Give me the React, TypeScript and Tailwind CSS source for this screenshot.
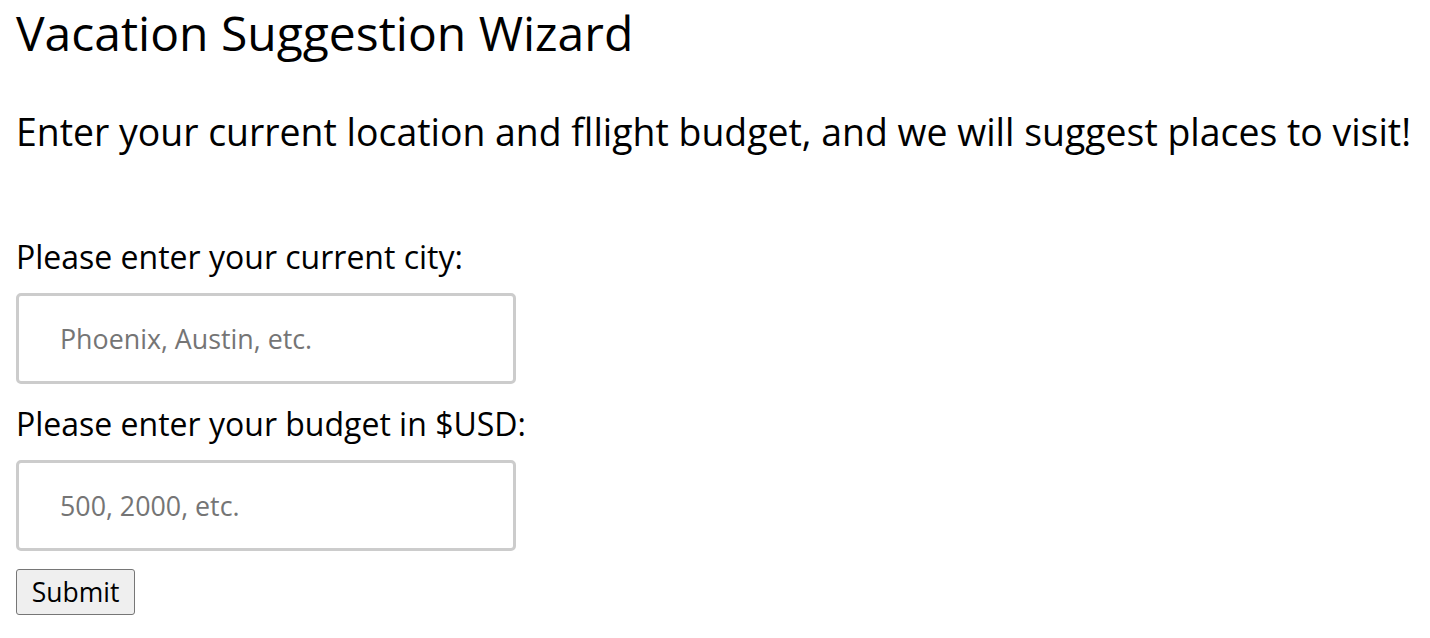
export default function App() {
  return (
    <div className="min-h-screen bg-white text-black px-4" style={{ fontFamily: '"Open Sans", sans-serif' }}>
      <h1 className="text-[48px] leading-[56px] pt-[5px] m-0">Vacation Suggestion Wizard</h1>
      <h2 className="text-[37.4px] leading-[44px] mt-[49px] m-0">Enter your current location and fllight budget, and we will suggest places to visit!</h2>
      <form className="mt-[83px] flex flex-col items-start">
        <label className="text-[32px] leading-[40px]">Please enter your current city:</label>
        <input
          className="mt-[16px] w-[500px] h-[91px] border-[3px] border-[#cccccc] rounded-[5px] px-[41px] text-[26.8px] placeholder:text-[#757575] outline-none"
          placeholder="Phoenix, Austin, etc."
        />
        <label className="mt-[20px] text-[32px] leading-[40px]">Please enter your budget in $USD:</label>
        <input
          className="mt-[16px] w-[500px] h-[91px] border-[3px] border-[#cccccc] rounded-[5px] px-[41px] text-[26.8px] placeholder:text-[#757575] outline-none"
          placeholder="500, 2000, etc."
        />
        <button className="mt-[18px] w-[119px] h-[46px] text-[26.5px] leading-none bg-[#efefef] border border-[#767676] rounded-[3px]">Submit</button>
      </form>
    </div>
  );
}
